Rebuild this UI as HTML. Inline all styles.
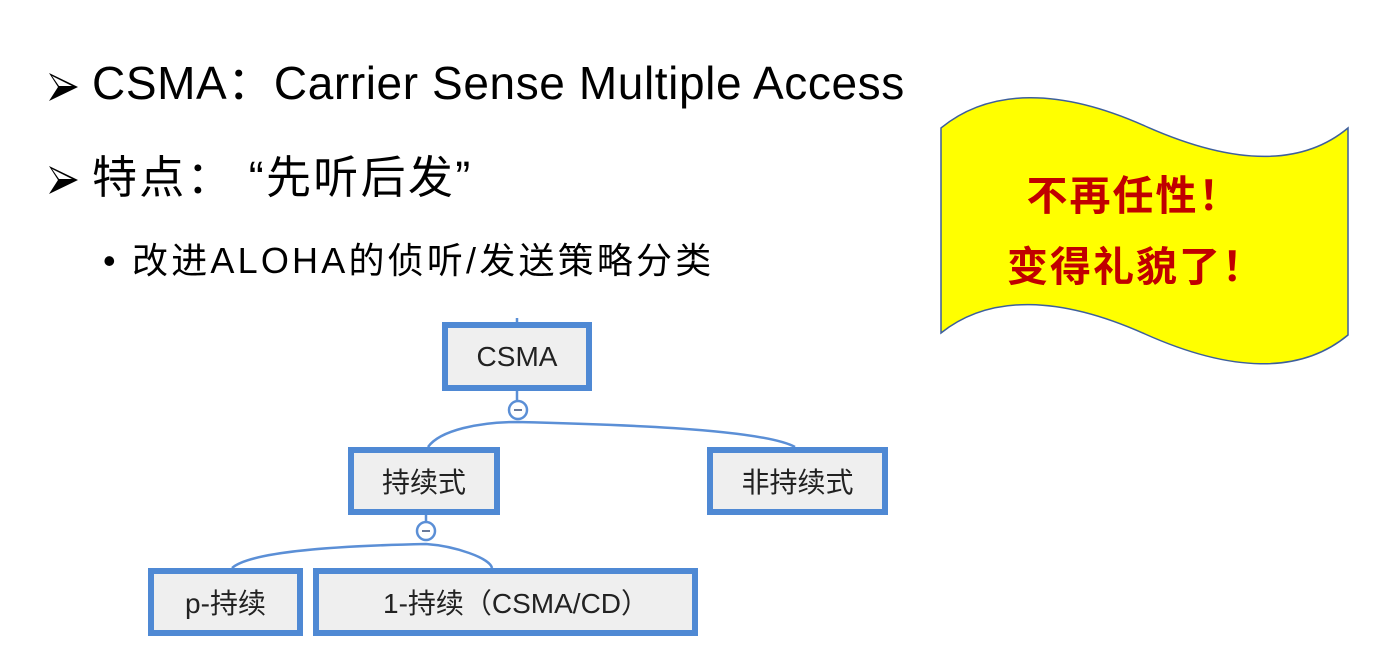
<!DOCTYPE html>
<html><head><meta charset="utf-8"><style>
body{margin:0;width:1375px;height:656px;background:#fff;position:relative;overflow:hidden;font-family:"Liberation Sans","Noto Sans CJK SC",sans-serif;}
.t{position:absolute;white-space:nowrap;color:#000;line-height:1;}
.box{position:absolute;box-sizing:border-box;border:6px solid #4f89d4;background:#efefef;display:flex;align-items:center;justify-content:center;font-size:28px;color:#222;}
</style></head><body>
<div class="t" style="left:92px;top:60px;font-size:46px;letter-spacing:0.6px;">CSMA：Carrier Sense Multiple Access</div>
<div class="t" style="left:92px;top:155px;font-size:45px;letter-spacing:2.3px;">特点： “先听后发”</div>
<div class="t" style="left:103px;top:243px;font-size:36px;letter-spacing:3.2px;">• 改进ALOHA的侦听/发送策略分类</div>

<svg style="position:absolute;left:0;top:0" width="1375" height="656">
<g>
<path d="M49,73 L78,87 L49,101 L58,87 Z" fill="#000"/>
<path d="M52,76 L72,86 L59,86 Z" fill="#fff"/>
<path d="M49,166 L78,180 L49,194 L58,180 Z" fill="#000"/>
<path d="M52,169 L72,179 L59,179 Z" fill="#fff"/>
</g>
<path d="M941,128 C990,88 1060,88 1145,126 C1230,164 1300,168 1348,128 L1348,335 C1300,375 1230,372 1145,334 C1060,296 990,294 941,333 Z" fill="#ffff00" stroke="#3d5f9c" stroke-width="1.5"/>
<g fill="none" stroke="#5b8fd6" stroke-width="2.5">
<line x1="517" y1="318" x2="517" y2="325"/>
<line x1="517" y1="390" x2="517" y2="401"/>
<path d="M428,447 C440,430 480,422 517,422 C600,424 760,428 795,447"/>
<line x1="426" y1="515" x2="426" y2="522"/>
<path d="M232,568 C250,552 330,546 426,544 C455,546 490,558 492,568"/>
<circle cx="518" cy="410" r="9" fill="#fff"/>
<circle cx="426" cy="531" r="9" fill="#fff"/>
</g>
<line x1="514" y1="410" x2="522" y2="410" stroke="#6a7a9a" stroke-width="2"/>
<line x1="422" y1="531" x2="430" y2="531" stroke="#6a7a9a" stroke-width="2"/>
<path d="M348,586 L363,596 L351,604 L351,618 L348,618 Z" fill="#e84646"/>
<text x="1134" y="210" text-anchor="middle" font-size="41" font-weight="bold" fill="#c00000" letter-spacing="2" font-family="Liberation Sans, Noto Sans CJK SC, sans-serif">不再任性！</text>
<text x="1136" y="281" text-anchor="middle" font-size="41" font-weight="bold" fill="#c00000" letter-spacing="2" font-family="Liberation Sans, Noto Sans CJK SC, sans-serif">变得礼貌了！</text>
</svg>

<div class="box" style="left:442px;top:322px;width:150px;height:69px;">CSMA</div>
<div class="box" style="left:348px;top:447px;width:152px;height:68px;">持续式</div>
<div class="box" style="left:707px;top:447px;width:181px;height:68px;">非持续式</div>
<div class="box" style="left:148px;top:568px;width:155px;height:68px;">p-持续</div>
<div class="box" style="left:313px;top:568px;width:385px;height:68px;justify-content:flex-start;padding-left:64px;">1-持续（CSMA/CD）</div>
</body></html>
